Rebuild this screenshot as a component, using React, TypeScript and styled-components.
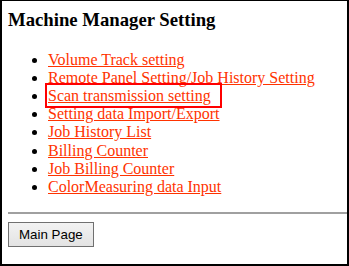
import React from "react";
import styled, { createGlobalStyle } from "styled-components";

const Global = createGlobalStyle`
  html, body { margin: 0; padding: 0; background: #fff; }
  body { font-family: "Liberation Serif", "Times New Roman", serif; font-size: 16px; }
`;

const Frame = styled.div`
  box-sizing: border-box;
  width: 349px;
  height: 266px;
  border-style: solid;
  border-color: #000;
  border-width: 1px 2px 2px 2px;
  padding: 8px 0 0 6px;
  background: #fff;
  overflow: hidden;
`;

const Title = styled.h3`
  margin: 0 0 19.5px 0;
  font-size: 18.72px;
  font-weight: bold;
  color: #000;
`;

const Menu = styled.ul`
  margin: 0 0 16px 0;
  padding-left: 40px;
  list-style: disc;
`;

const Item = styled.li`
  line-height: 18.2px;
`;

const Link = styled.a<{ $active?: boolean }>`
  color: #ff3300;
  text-decoration: underline;
  cursor: pointer;
  ${(p) =>
    p.$active
      ? `outline: 2px solid #ff0000; outline-offset: 0; padding: 2px 9px 2px 1px; margin-left: -1px;`
      : ""}
`;

const Rule = styled.hr`
  margin: 0 0 8px 0;
  border: none;
  border-top: 2px solid #a0a0a0;
  height: 0;
`;

const Button = styled.button`
  font-family: "Liberation Sans", Arial, sans-serif;
  font-size: 13.33px;
  height: 25px;
  padding: 0 10px;
  color: #000;
  border: 1px solid #707070;
  border-radius: 0;
  background: linear-gradient(#f2f2f2, #e3e3e3);
`;

const items = [
  "Volume Track setting",
  "Remote Panel Setting/Job History Setting",
  "Scan transmission setting",
  "Setting data Import/Export",
  "Job History List",
  "Billing Counter",
  "Job Billing Counter",
  "ColorMeasuring data Input",
];

export default function App() {
  return (
    <>
      <Global />
      <Frame>
        <Title>Machine Manager Setting</Title>
        <Menu>
          {items.map((t, i) => (
            <Item key={t}>
              <Link $active={i === 2}>{t}</Link>
            </Item>
          ))}
        </Menu>
        <Rule />
        <Button>Main Page</Button>
      </Frame>
    </>
  );
}
